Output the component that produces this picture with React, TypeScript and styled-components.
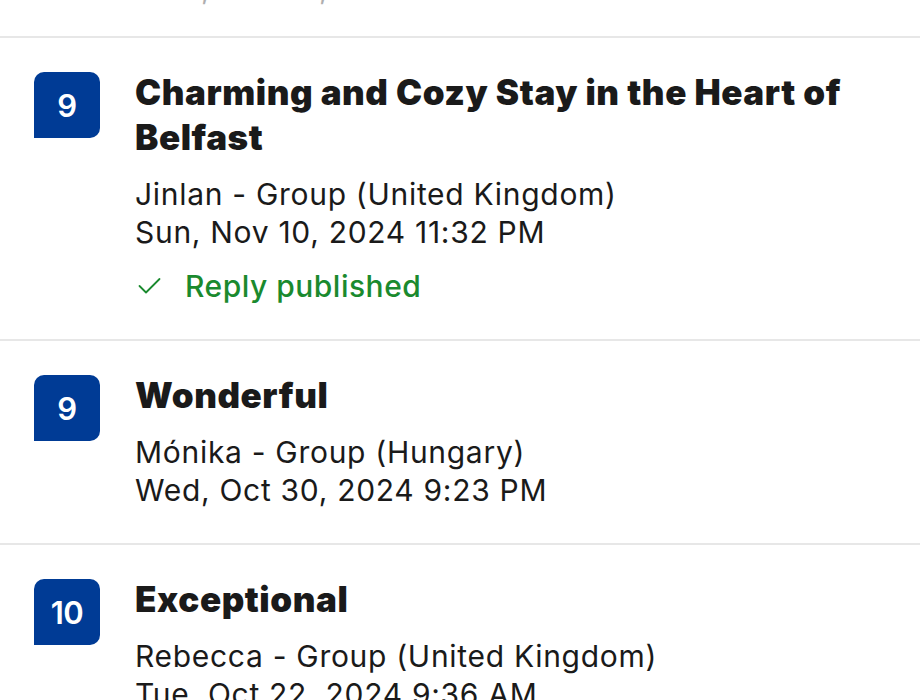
import React from "react";
import styled, { createGlobalStyle } from "styled-components";

const Global = createGlobalStyle`
  html, body { margin: 0; padding: 0; background: #ffffff; }
  body { font-family: Inter, "Noto Sans", "Liberation Sans", sans-serif; color: #1a1a1a; overflow: hidden; }
`;

const Page = styled.div`
  width: 920px;
  display: flex;
  flex-direction: column;
`;

const Stub = styled.div`
  height: 36px;
  overflow: hidden;
  padding-left: 135px;
`;

const StubLine = styled.div`
  margin-top: -31px;
  font-size: 30px;
  line-height: 38px;
  letter-spacing: 0.7px;
  color: #1a1a1a;
  opacity: 0.35;
`;

const Row = styled.div`
  display: flex;
  align-items: flex-start;
  gap: 35px;
  padding: 34px 0 34px 34px;
  border-top: 2px solid #e7e7e7;
`;

const Badge = styled.div`
  flex: none;
  width: 66px;
  height: 66px;
  background: #003b95;
  border-radius: 10px 10px 10px 0;
  color: #ffffff;
  display: flex;
  align-items: center;
  justify-content: center;
  font-size: 31px;
  font-weight: 600;
  letter-spacing: -0.5px;
`;

const Body = styled.div`
  display: flex;
  flex-direction: column;
  min-width: 0;
  padding-right: 30px;
`;

const Title = styled.div`
  margin-top: -2px;
  font-size: 35px;
  line-height: 45px;
  font-weight: 900;
  color: #1a1a1a;
  letter-spacing: 0.55px;
`;

const Meta = styled.div`
  margin-top: 15px;
  font-size: 30px;
  line-height: 38px;
  letter-spacing: 0.7px;
  color: #1a1a1a;
`;

const Status = styled.div`
  margin-top: 16px;
  display: flex;
  align-items: center;
  gap: 24px;
  padding-left: 3px;
  font-size: 30px;
  line-height: 38px;
  font-weight: 500;
  letter-spacing: 0.5px;
  color: #1a8a2e;
`;

const CheckIcon = () => (
  <svg width="23" height="18" viewBox="0 0 23 18" fill="none">
    <polyline points="1.5,9 8,15.5 21.5,2" stroke="#1a8a2e" strokeWidth="1.8" strokeLinecap="round" strokeLinejoin="round" />
  </svg>
);

type Review = {
  score: number;
  title: string;
  author: string;
  date: string;
  replied?: boolean;
};

const reviews: Review[] = [
  {
    score: 9,
    title: "Charming and Cozy Stay in the Heart of Belfast",
    author: "Jinlan - Group (United Kingdom)",
    date: "Sun, Nov 10, 2024 11:32 PM",
    replied: true,
  },
  {
    score: 9,
    title: "Wonderful",
    author: "Mónika - Group (Hungary)",
    date: "Wed, Oct 30, 2024 9:23 PM",
  },
  {
    score: 10,
    title: "Exceptional",
    author: "Rebecca - Group (United Kingdom)",
    date: "Tue, Oct 22, 2024 9:36 AM",
  },
];

export default function App() {
  return (
    <Page>
      <Global />
      <Stub>
        <StubLine>Wed, Nov 13, 2024 8:41 PM</StubLine>
      </Stub>
      {reviews.map((r, i) => (
        <Row key={i}>
          <Badge>{r.score}</Badge>
          <Body>
            <Title>{r.title}</Title>
            <Meta>
              <div>{r.author}</div>
              <div>{r.date}</div>
            </Meta>
            {r.replied && (
              <Status>
                <CheckIcon />
                <span>Reply published</span>
              </Status>
            )}
          </Body>
        </Row>
      ))}
    </Page>
  );
}
